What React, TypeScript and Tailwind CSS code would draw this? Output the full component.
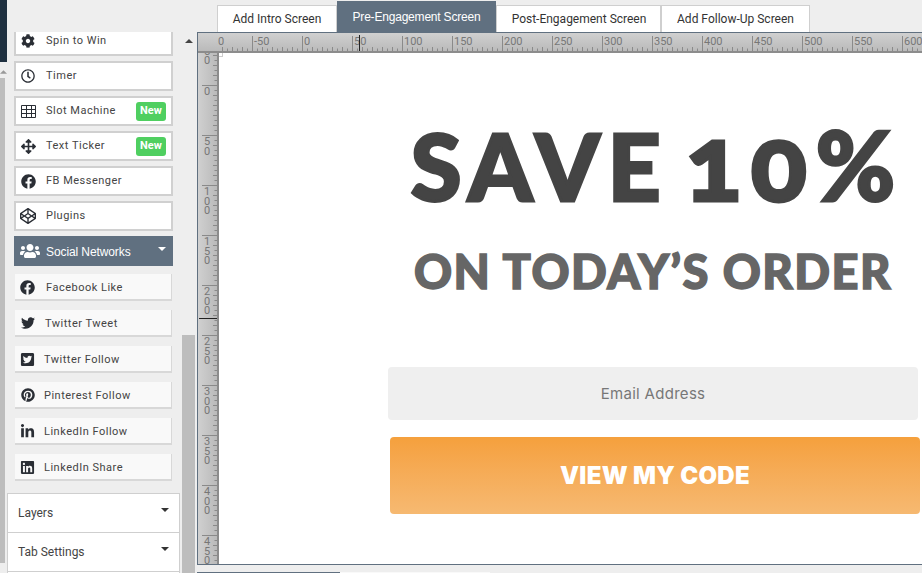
import type { ReactNode } from "react";
import {
  FaArrowsAlt,
  FaCodepen,
  FaCog,
  FaFacebook,
  FaLinkedin,
  FaLinkedinIn,
  FaPinterest,
  FaRegClock,
  FaTwitter,
  FaTwitterSquare,
  FaUsers,
} from "react-icons/fa";

const roboto = "font-['Roboto','Liberation_Sans',sans-serif]";

function GridIcon() {
  return (
    <svg viewBox="0 0 15 13" className="h-[13px] w-[15px]" fill="none" stroke="currentColor">
      <path d="M.5.5h14v12H.5zM.5 4.5h14M.5 8.5h14M5.5.5v12M10.5.5v12" />
    </svg>
  );
}

const mainItems = [
  { label: "Spin to Win", icon: <FaCog className="h-[14px] w-[14px]" /> },
  { label: "Timer", icon: <FaRegClock className="h-[14px] w-[14px]" /> },
  { label: "Slot Machine", icon: <GridIcon />, isNew: true },
  { label: "Text Ticker", icon: <FaArrowsAlt className="h-[15px] w-[15px]" />, isNew: true },
  { label: "FB Messenger", icon: <FaFacebook className="h-[15px] w-[15px]" /> },
  { label: "Plugins", icon: <FaCodepen className="h-[16px] w-[16px]" /> },
];

const socialItems: { label: string; icon: ReactNode; textClass: string; iconClass: string }[] = [
  { label: "Facebook Like", icon: <FaFacebook className="h-[15px] w-[15px]" />, textClass: "ml-[11px]", iconClass: "ml-[5px]" },
  { label: "Twitter Tweet", icon: <FaTwitter className="h-[14px] w-[14px]" />, textClass: "ml-[10px]", iconClass: "ml-[5px]" },
  { label: "Twitter Follow", icon: <FaTwitterSquare className="h-[15px] w-[15px]" />, textClass: "ml-[9px]", iconClass: "ml-[5px]" },
  { label: "Pinterest Follow", icon: <FaPinterest className="h-[14px] w-[14px]" />, textClass: "ml-[9px]", iconClass: "ml-[5px]" },
  { label: "LinkedIn Follow", icon: <FaLinkedinIn className="h-[15px] w-[15px]" />, textClass: "ml-[9px]", iconClass: "ml-[5px]" },
  { label: "LinkedIn Share", icon: <FaLinkedin className="h-[15px] w-[15px]" />, textClass: "ml-[9px]", iconClass: "ml-[5px]" },
];

const tabs = [
  { label: "Add Intro Screen", width: "w-[120px]" },
  { label: "Pre-Engagement Screen", width: "w-[159px]", active: true },
  { label: "Post-Engagement Screen", width: "w-[165px] pl-[1px]" },
  { label: "Add Follow-Up Screen", width: "w-[149px]" },
];

function Caret({ className }: { className: string }) {
  return (
    <svg viewBox="0 0 8 4" className={`h-[4px] w-[8px] ${className}`}>
      <path d="M0 0h8L4 4z" fill="currentColor" />
    </svg>
  );
}

function TopRuler() {
  const ticks = [];
  for (let x = 222; x < 922; x += 5) {
    const long = (x - 252) % 10 === 0;
    ticks.push(<line key={x} x1={x - 197.5} x2={x - 197.5} y1={long ? 14 : 15.5} y2={18} stroke="#8a8a8a" />);
  }
  const labels = [];
  for (let i = 0; i < 14; i++) {
    const x = 252 + i * 50;
    const value = i === 0 ? -50 : i === 1 ? 0 : (i - 1) * 50;
    labels.push(
      <g key={x}>
        <line x1={x - 197.5} x2={x - 197.5} y1={3} y2={18} stroke="#8a8a8a" />
        <text x={x - 196} y={12} fontSize="11" fill="#777">
          {value}
        </text>
      </g>
    );
  }
  return (
    <div className="h-[20px] shrink-0 border-b-2 border-[#8c8c8c] bg-gradient-to-b from-[#d0d0d0] to-[#bababa]">
      <svg width="724" height="18" className={roboto}>
        <text x={20} y={12} fontSize="11" fill="#777">
          0
        </text>
        {ticks}
        {labels}
        <line x1={161.5} x2={161.5} y1={2} y2={18} stroke="#222" />
      </svg>
    </div>
  );
}

function LeftRuler() {
  const ticks = [];
  for (let y = 55; y < 565; y += 5) {
    const long = (y - 85) % 10 === 0;
    ticks.push(<line key={y} x1={long ? 15 : 16.5} x2={19} y1={y - 52.5} y2={y - 52.5} stroke="#8a8a8a" />);
  }
  const labels = [];
  for (let i = -1; i < 10; i++) {
    const y = 85 + i * 50;
    const chars = String(i === -1 ? "-50" : i * 50).split("");
    labels.push(
      <g key={y}>
        <line x1={4} x2={19} y1={y - 52.5} y2={y - 52.5} stroke="#8a8a8a" />
        {chars.map((c, n) => (
          <text key={n} x={9} y={y - 53 + 10 + n * 9.5} fontSize="11" fill="#777" textAnchor="middle">
            {c}
          </text>
        ))}
      </g>
    );
  }
  return (
    <div className="w-[21px] shrink-0 border-r-2 border-[#8c8c8c] bg-gradient-to-r from-[#d0d0d0] to-[#bababa]">
      <svg width="19" height="511" className={roboto}>
        {ticks}
        {labels}
        <line x1={1} x2={19} y1={265.5} y2={265.5} stroke="#222" />
      </svg>
    </div>
  );
}

function NewBadge() {
  return (
    <span className="ml-auto mr-[5px] flex h-[19px] w-[30px] items-center justify-center rounded-[3px] bg-[#4fcf60] pt-[1px] text-[11px] font-bold text-white">
      New
    </span>
  );
}

function Sidebar() {
  return (
    <div className="flex w-[197px] shrink-0">
      <div className="flex w-[7px] shrink-0 flex-col">
        <div className="h-[62px] bg-[#1f3040]" />
        <div className="flex h-[16px] justify-start pt-[8px]">
          <Caret className="h-[3px] w-[5px] rotate-180 text-[#999]" />
        </div>
        <div className="h-[485px] w-[5px] bg-[#bdbdbd]" />
      </div>

      <div className="w-[173px] shrink-0 pt-[32px]">
        <div className="h-[461px] overflow-hidden pl-[7px] pr-[7px]">
          <div className="-mt-[6px] flex flex-col gap-[5px]">
            {mainItems.map((item) => (
              <div key={item.label} className="flex h-[30px] items-center border-2 border-[#d0d0d0] bg-white">
                <span className="ml-[4px] flex w-[16px] justify-center text-[#2a2e35]">{item.icon}</span>
                <span className="ml-[10px] text-[11px] tracking-[0.5px] text-[#444]">{item.label}</span>
                {item.isNew && <NewBadge />}
              </div>
            ))}
            <div className="flex h-[30px] items-center bg-[#607080] text-white">
              <FaUsers className="ml-[6px] h-[20px] w-[20px] shrink-0" />
              <span className="ml-[6px] mt-[2px] font-['Liberation_Sans',sans-serif] text-[12px] tracking-[-0.1px]">
                Social Networks
              </span>
              <Caret className="ml-auto mr-[7px] -mt-[5px] text-white" />
            </div>
            <div className="mt-[3px] flex flex-col gap-[9px] px-[1px]">
              {socialItems.map((item) => (
                <div
                  key={item.label}
                  className="flex h-[27px] items-center border-b-2 border-r border-[#d8d8d8] bg-[#f9f9f9] pt-[1px]"
                >
                  <span className={`flex w-[15px] justify-center text-[#2a2e35] ${item.iconClass}`}>{item.icon}</span>
                  <span className={`mt-[2px] text-[11px] tracking-[0.5px] text-[#444] ${item.textClass}`}>
                    {item.label}
                  </span>
                </div>
              ))}
            </div>
          </div>
        </div>
        {["Layers", "Tab Settings"].map((title) => (
          <div
            key={title}
            className="flex h-[39px] items-center justify-between border border-b-0 border-[#cfcfcf] bg-white pl-[10px] pr-[10px]"
          >
            <span className="text-[12px] text-[#444]">{title}</span>
            <Caret className="-mt-[7px] text-[#333]" />
          </div>
        ))}
        <div className="h-[2px] border-x border-t border-[#cfcfcf] bg-white" />
      </div>

      <div className="ml-[2px] flex w-[13px] shrink-0 flex-col items-center">
        <Caret className="mt-[39px] h-[4px] w-[8px] rotate-180 text-[#444]" />
        <div className="mt-[292px] w-full flex-1 bg-[#bdbdbd]" />
      </div>
    </div>
  );
}

function Tabs() {
  return (
    <div className="flex h-[32px] shrink-0 items-end pl-[20px]">
      {tabs.map((tab) =>
        tab.active ? (
          <div
            key={tab.label}
            className={`flex h-[31px] items-center justify-center bg-[#607080] font-['Liberation_Sans',sans-serif] text-[12px] tracking-[-0.2px] text-white ${tab.width}`}
          >
            {tab.label}
          </div>
        ) : (
          <div
            key={tab.label}
            className={`flex h-[27px] items-center justify-center border border-b-0 border-[#cfcfcf] bg-white text-[12px] text-[#333] ${tab.width}`}
          >
            {tab.label}
          </div>
        )
      )}
    </div>
  );
}

function Canvas() {
  return (
    <div className="relative min-w-0 flex-1 overflow-hidden bg-white">
      <div className="absolute left-0 top-0 h-[4px] w-[4px] border-b border-r border-[#ccc] bg-white" />
      <div className="flex w-[699px] flex-col pl-[169px] pt-[55px]">
        <div className="ml-[8px] h-[116px] whitespace-nowrap text-center font-['Lato',sans-serif] text-[92px] font-black leading-[116px] tracking-[8px] text-[#444] oldstyle-nums [word-spacing:-13px] [-webkit-text-stroke:3px_#444]">
          SAVE <span className="text-[104px] leading-[0] tracking-[9px]">10</span>
          <span className="text-[96px] leading-[0]">%</span>
        </div>
        <div className="mt-[19px] h-[56px] whitespace-nowrap text-center font-['Lato',sans-serif] text-[47px] font-black leading-[56px] tracking-[1.5px] text-[#666] [-webkit-text-stroke:1.5px_#666]">
          ON TODAY’S ORDER
        </div>
        <div className="mt-[68px] flex h-[53px] w-[530px] items-center justify-center rounded-[4px] bg-[#efefef] pt-[2px] font-['Inter',sans-serif] text-[15px] tracking-[0.3px] text-[#777]">
          Email Address
        </div>
        <div className="ml-[2px] mt-[17px] flex h-[77px] w-[530px] items-center justify-center rounded-[4px] bg-gradient-to-b from-[#f5a03c] to-[#f6b971] font-['Inter',sans-serif] text-[24px] font-black tracking-[0.3px] text-white">
          VIEW MY CODE
        </div>
      </div>
    </div>
  );
}

export default function App() {
  return (
    <div className={`flex h-[573px] w-[922px] overflow-hidden bg-[#eeeeee] ${roboto}`}>
      <Sidebar />
      <div className="flex min-w-0 flex-1 flex-col">
        <Tabs />
        <div className="flex h-[533px] shrink-0 flex-col border-y border-l border-[#607080]">
          <TopRuler />
          <div className="flex min-h-0 flex-1">
            <LeftRuler />
            <Canvas />
          </div>
        </div>
        <div className="mt-[7px] flex h-[1px] shrink-0">
          <div className="w-[143px] bg-[#607080]" />
          <div className="w-[150px] bg-[#f9f9f9]" />
        </div>
      </div>
    </div>
  );
}
